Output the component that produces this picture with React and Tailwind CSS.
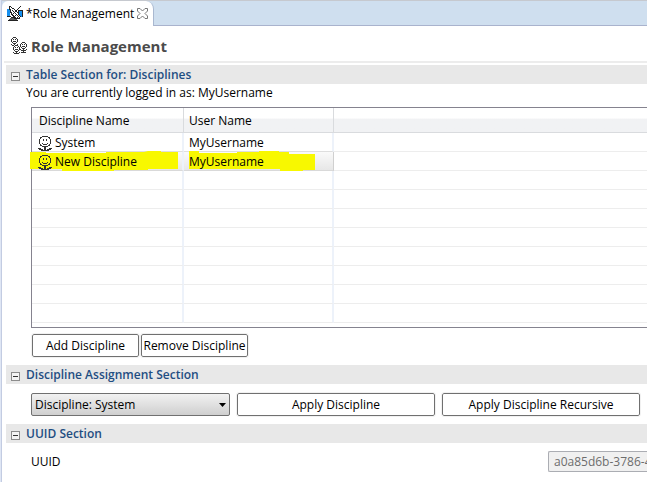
import React from "react";

const rows = [
  { name: "System", user: "MyUsername" },
  { name: "New Discipline", user: "MyUsername", selected: true },
];
const emptyRows = [0, 1, 2, 3, 4, 5, 6, 7];

const personPixels = [
  "....######....",
  "..##......##..",
  "..#........#..",
  ".#...#..#...#.",
  ".#...#..#...#.",
  ".#..........#.",
  ".#..........#.",
  ".#..#....#..#.",
  "..#..####..#..",
  "..##......##..",
  "....######....",
  "......##......",
  "###...##...###",
  ".####.##.####.",
  "...########...",
];

const smallPersonPixels = [
  "..###..",
  ".#...#.",
  "#.#.#.#",
  "#.....#",
  "#.###.#",
  ".#...#.",
  "..###..",
  "#..#..#",
  ".#####.",
];

const dishPixels = [
  "..##.........#..",
  "..#.#.......#...",
  "..#..##....#....",
  "bb##...#..#.....",
  "bbb#.#..##.#####",
  "bbb#..#.##.#bbb#",
  "bbb##..#..##bbb#",
  "bbb.#.#.#..#bbb#",
  "bbb.##...#.#bbb#",
  "bbb..##.#.#.#bb#",
  "####..##...#.#b#",
  "....#####.#.#...",
  "...gggg######...",
  "..gggggggg......",
  ".##########.....",
];

function Pixels({ map, mark = "#", x = 0, y = 0, fill }) {
  const d = map
    .flatMap((line, row) => [...line].map((c, col) => (c === mark ? `M${x + col} ${y + row}h1v1h-1z` : "")))
    .join("");
  return <path d={d} fill={fill} />;
}

function DishIcon() {
  return (
    <svg width="16" height="15" viewBox="0 0 16 15" className="shrink-0" shapeRendering="crispEdges" aria-hidden="true">
      <Pixels map={dishPixels} mark="b" fill="#1590f0" />
      <Pixels map={dishPixels} mark="g" fill="#5a5a5a" />
      <Pixels map={dishPixels} fill="#222222" />
    </svg>
  );
}

function RolesIcon() {
  return (
    <svg width="17" height="17" viewBox="0 0 17 17" className="shrink-0" fill="#333" shapeRendering="crispEdges" aria-hidden="true">
      <Pixels map={smallPersonPixels} x={1} y={0} />
      <path d="M4 8h5v5H4z" fill="#fff" />
      <Pixels map={smallPersonPixels} x={3} y={8} />
      <Pixels map={smallPersonPixels} x={10} y={5} />
      <path d="M13 13h1v2h-1zM11 15h5v1h-5z" />
    </svg>
  );
}

function PersonIcon() {
  return (
    <svg width="14" height="15" viewBox="0 0 14 15" className="shrink-0" fill="#333" shapeRendering="crispEdges" aria-hidden="true">
      <Pixels map={personPixels} />
    </svg>
  );
}

function Section({ title, children }) {
  return (
    <section>
      <h2 className="flex h-[19px] items-center bg-[#e8e8e8] pl-[5px] text-[12px] font-semibold leading-4 text-[#1f4e82]">
        <button
          type="button"
          aria-label={"Collapse " + title}
          className="mt-1 mr-1.5 flex size-[9px] items-center justify-center border border-[#8c8c8c] bg-[#f4f4f4]"
        >
          <span className="h-px w-[5px] bg-[#333]" />
        </button>
        {title}
      </h2>
      {children}
    </section>
  );
}

function PushButton({ className, children }) {
  return (
    <button
      type="button"
      className={"h-[23px] rounded-[2px] border border-[#707070] bg-white text-center leading-4 whitespace-nowrap outline outline-[#f1f1f1] " + className}
    >
      {children}
    </button>
  );
}

export default function App() {
  return (
    <div className="h-screen overflow-hidden border-l border-[#dfe6f4] bg-white font-['Open_Sans','Noto_Sans',sans-serif] text-[12px] leading-4 text-black">
      <div className="h-full border-l border-[#c3cce2]">
        <header className="flex h-[26px] border-t border-[#c6c9cf] bg-[#cfdfef]">
          <div className="flex w-[152px] items-center rounded-tl-md rounded-tr-lg border-r border-[#a9b8d0] bg-white pl-[5px]">
            <DishIcon />
            <span className="ml-[3px] whitespace-nowrap">*Role Management</span>
            <button type="button" aria-label="Close tab" className="ml-[3px]">
              <svg width="11" height="11" viewBox="0 0 11 11" fill="#fff" stroke="#777">
                <path d="M.5.5h2.500L5.500 3 8 .5h2.500V3L8 5.500 10.500 8v2.500H8L5.500 8 3 10.500H.5V8L3 5.500.5 3z" />
              </svg>
            </button>
          </div>
          <div className="grow border-b border-[#a9b3cd]" />
        </header>
        <main className="pl-0.5">
          <div className="flex h-[35px] items-center gap-1 pt-1 pl-1.5">
            <RolesIcon />
            <h1 className="text-[15px] leading-5 font-bold text-[#4b4b4b]">Role Management</h1>
          </div>
          <div className="mb-0.5 h-0.5 bg-[#ececec]" />
          <div className="ml-0.5 flex flex-col gap-2">
            <Section title="Table Section for: Disciplines">
              <p className="pl-5 leading-[18px]">You are currently logged in as: MyUsername</p>
              <div className="mt-[5px] ml-[25px] h-[221px] border border-r-0 border-[#85838f]">
                <table className="w-full table-fixed border-separate border-spacing-0 text-left">
                  <colgroup>
                    <col className="w-[152px]" />
                    <col className="w-[150px]" />
                    <col />
                  </colgroup>
                  <thead>
                    <tr className="h-[25px] bg-linear-to-b from-white from-40% to-[#f1f2f4] to-45%">
                      <th className="border-r border-b border-[#d9dbde] p-0 pt-0.5 pl-[7px] font-normal">Discipline Name</th>
                      <th className="border-r border-b border-[#d9dbde] p-0 pt-0.5 pl-[5px] font-normal">User Name</th>
                      <th className="border-b border-[#d9dbde] p-0" />
                    </tr>
                  </thead>
                  <tbody>
                    {rows.map((r) => (
                      <tr key={r.name} className={r.selected ? "h-[19px] bg-linear-to-b from-[#fafafa] to-[#e6e6e6]" : "h-[19px]"}>
                        <td
                          className={
                            "relative border-r-2 border-b border-r-[#edf2fa] p-0 pl-[6px] " +
                            (r.selected ? "border-b-[#d9d9d9]" : "border-b-[#dedede]")
                          }
                        >
                          {r.selected && (
                            <svg className="absolute -top-px -left-0.5" width="150" height="21" aria-hidden="true">
                              <path d="M0 1h16v1h60V1h38l4-1h13v1h17v17h-30v1H84v1H32v-2H0z" fill="#f8f800" />
                            </svg>
                          )}
                          <span className="relative flex h-[18px] items-center gap-[3px] pt-0.5">
                            <PersonIcon />
                            {r.name}
                          </span>
                        </td>
                        <td
                          className={
                            "relative border-b p-0 pl-[5px] " +
                            (r.selected ? "border-r border-r-[#d0d0d0] border-b-[#d9d9d9]" : "border-r-2 border-r-[#edf2fa] border-b-[#dedede]")
                          }
                        >
                          {r.selected && (
                            <svg className="absolute -top-px left-[5px]" width="127" height="21" aria-hidden="true">
                              <path d="M0 0h10v2h38V1h22V0h20v1h10v2h26v16h-12v1H91v-2H0z" fill="#f8f800" />
                            </svg>
                          )}
                          <span className="relative flex h-[18px] items-center pt-0.5">{r.user}</span>
                        </td>
                        <td className="border-b border-[#ededed] bg-white p-0" />
                      </tr>
                    ))}
                    {emptyRows.map((n) => (
                      <tr key={n} className="h-[19px]">
                        <td className="border-r-2 border-b border-r-[#edf2fa] border-b-[#ededed] p-0" />
                        <td className="border-r-2 border-b border-r-[#edf2fa] border-b-[#ededed] p-0" />
                        <td className="border-b border-[#ededed] p-0" />
                      </tr>
                    ))}
                  </tbody>
                </table>
              </div>
              <div className="mt-1.5 ml-[26px] flex gap-0.5">
                <PushButton className="w-[107px]">Add Discipline</PushButton>
                <PushButton className="w-[107px]">Remove Discipline</PushButton>
              </div>
            </Section>
            <Section title="Discipline Assignment Section">
              <div className="mt-[9px] mr-[7px] ml-[25px] flex gap-[7px]">
                <div className="relative w-[199px] shrink-0">
                  <select
                    aria-label="Discipline"
                    className="h-[23px] w-full appearance-none rounded-[2px] border border-[#707070] bg-linear-to-b from-[#f2f2f2] to-[#cfcfcf] pl-[3px] leading-4"
                  >
                    <option>Discipline: System</option>
                  </select>
                  <svg className="pointer-events-none absolute top-[10px] right-1" width="7" height="4" aria-hidden="true">
                    <path d="M0 0h7L3.500 4z" />
                  </svg>
                </div>
                <PushButton className="flex-1">Apply Discipline</PushButton>
                <PushButton className="flex-1">Apply Discipline Recursive</PushButton>
              </div>
            </Section>
            <Section title="UUID Section">
              <div className="mt-2 ml-[25px] flex items-center justify-between">
                <label htmlFor="uuid">UUID</label>
                <input
                  id="uuid"
                  readOnly
                  defaultValue="a0a85d6b-3786-4e"
                  className="h-[21px] w-[99px] rounded-l-[2px] border border-r-0 border-[#abadb3] bg-[#f0f0f0] pl-[5px] leading-4 text-[#6d6d6d]"
                />
              </div>
            </Section>
          </div>
        </main>
      </div>
    </div>
  );
}
